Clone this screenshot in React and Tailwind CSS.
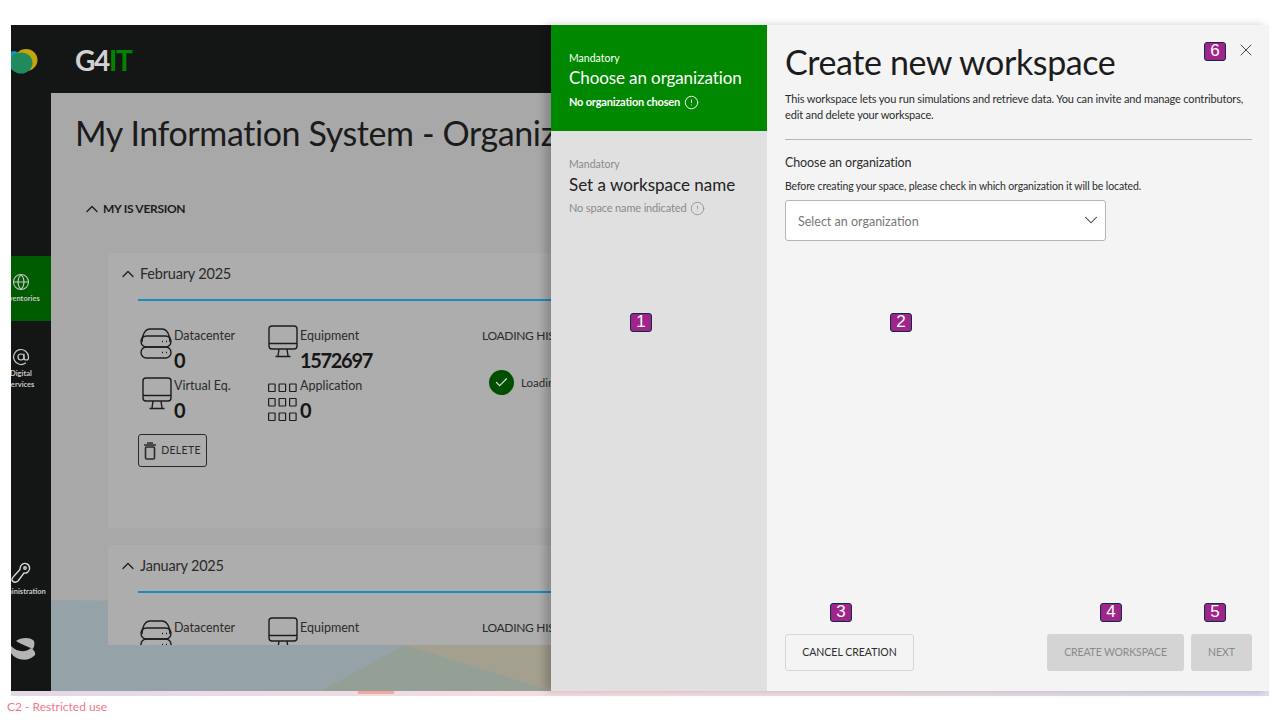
import React from "react";
import { ChevronDown, ChevronUp, CircleAlert, Check, X, Globe, AtSign } from "lucide-react";

const FONT = { fontFamily: '"Lato", "Liberation Sans", sans-serif' };

function ServerIcon() {
  return (
    <svg width="32" height="32" viewBox="0 0 32 32" fill="none" stroke="currentColor" strokeWidth="1.4">
      <path d="M2 15 C2 8 5 2 10 2 H22 C27 2 30 8 30 15" />
      <rect x="1" y="9" width="30" height="11" rx="5.5" />
      <rect x="1" y="20" width="30" height="11" rx="5.5" />
      <path d="M22 14.5h1M26 14.5h1M22 25.5h1M26 25.5h1" />
    </svg>
  );
}

function MonitorIcon() {
  return (
    <svg width="30" height="33" viewBox="0 0 30 33" fill="none" stroke="currentColor" strokeWidth="1.4">
      <rect x="1" y="1" width="28" height="23" rx="3" />
      <path d="M1 18.5h28M11 24l-1 7M19 24l1 7M7.5 31.5h15" />
    </svg>
  );
}

function GridIcon() {
  const cells = [0, 10.5, 21];
  return (
    <svg width="30" height="39" viewBox="0 0 30 39" fill="none" stroke="currentColor" strokeWidth="1.2">
      {[1, 15.5, 30].map((y) =>
        cells.map((x) => <rect key={`${x}-${y}`} x={x + 0.6} y={y} width="6.5" height="7.5" rx="0.5" />)
      )}
    </svg>
  );
}

function TrashIcon() {
  return (
    <svg width="12" height="18" viewBox="0 0 12 18" fill="none" stroke="currentColor" strokeWidth="1.6">
      <path d="M0 3h12M3 1h6" />
      <rect x="1.5" y="5" width="9" height="12" rx="1" />
    </svg>
  );
}

function KeyIcon() {
  return (
    <svg width="20" height="22" viewBox="0 0 20 22" fill="none" stroke="#d6d6d6" strokeWidth="1.4">
      <path d="M11 2.5 C14 0 19 2 18.5 7 C18 10 15.5 11.5 13 11 L7 19 C5 21 1.5 20.5 1 18 C0.5 16 2 15 3.5 13.5 L9 7.5 C8.8 5.5 9.5 3.8 11 2.5 Z" />
      <circle cx="14" cy="6" r="1.2" />
    </svg>
  );
}

function AppLogo() {
  return (
    <svg width="27" height="25" viewBox="0 0 27 25">
      <ellipse cx="3" cy="9" rx="6" ry="7" fill="#1a8fc0" />
      <ellipse cx="15" cy="11" rx="11.5" ry="11" fill="#c2a60a" />
      <ellipse cx="10" cy="14" rx="11.5" ry="10.5" fill="#1f8a5e" />
    </svg>
  );
}

function SwooshLogo() {
  return (
    <svg width="25" height="25" viewBox="0 0 25 25" fill="#b4b4b4">
      <path d="M5 4 C10 0 20 0 23 4 C24 7 23 10 22 12 C16 9 9 7 5 4 Z" />
      <path d="M0 9 C6 15 14 16 20 11 C23 13 25 16 24 18 C18 25 5 24 0 16 Z" />
    </svg>
  );
}

function NavItem({ icon, lines, active, height }) {
  return (
    <div className={`w-[60px] flex flex-col items-center justify-center text-[7.5px] leading-[11px] text-[#c8c8c8] ${height} ${active ? "bg-[#005c00]" : ""}`}>
      {icon}
      <div className="mt-[2px] text-center font-bold">
        {lines.map((l) => <div key={l}>{l}</div>)}
      </div>
    </div>
  );
}

function Stat({ icon, label, value, iconClass }) {
  return (
    <div className="flex h-[50px] items-start">
      <div className={`w-[34px] shrink-0 text-[#1c1c1c] ${iconClass}`}>{icon}</div>
      <div>
        <div className="pt-[1px] text-[12.5px] leading-[19px] text-[#2b2b2b] whitespace-nowrap">{label}</div>
        <div className="text-[20px] leading-[30px] font-bold text-[#161616] tracking-[-1.3px] whitespace-nowrap">{value}</div>
      </div>
    </div>
  );
}

function VersionCard({ title, stats, extra, height }) {
  return (
    <div className={`w-[700px] shrink-0 bg-[#adadad] rounded-[3px] pl-[10px] ${height}`}>
      <div className="flex items-center h-[41px]">
        <ChevronUp size={20} strokeWidth={1.5} className="text-[#1c1c1c]" />
        <span className="ml-[2px] text-[14.5px] tracking-[-0.2px] text-[#2a2a2a]">{title}</span>
      </div>
      <div className="ml-[20px] mt-[5px] h-[2px] bg-[#1a8cbc]" />
      <div className="ml-[22px] mt-[24px] flex">
        <div className="w-[342px] shrink-0">
          <div className="grid grid-cols-[128px_1fr]">
            {stats.map((s) => <Stat key={s.label} {...s} />)}
          </div>
          {extra}
        </div>
        <div>
          <div className="pt-[1px] text-[12px] leading-[19px] tracking-[-0.3px] text-[#2b2b2b] whitespace-nowrap">LOADING HISTORY</div>
          {title === "February 2025" && (
            <div className="mt-[25px] ml-[7px] flex items-center">
              <span className="w-[25px] h-[25px] rounded-full bg-[#004f00] flex items-center justify-center">
                <Check size={15} strokeWidth={2} className="text-[#d8d8d8]" />
              </span>
              <span className="ml-[7px] text-[11.5px] text-[#2b2b2b]">Loading</span>
            </div>
          )}
        </div>
      </div>
    </div>
  );
}

function Callout({ n, className }) {
  return (
    <span
      className={`absolute w-[22px] h-[19px] rounded-[3px] border-[1.5px] border-[#0f2a44] bg-[#a0258a] text-white text-[17px] leading-[16px] text-center ${className}`}
      style={{ fontFamily: '"Liberation Sans", sans-serif' }}
    >
      {n}
    </span>
  );
}

const FEB_STATS = [
  { icon: <ServerIcon />, label: "Datacenter", value: "0", iconClass: "pt-[2px]" },
  { icon: <MonitorIcon />, label: "Equipment", value: "1\u200A572\u200A697", iconClass: "-mr-[2px]" },
  { icon: <MonitorIcon />, label: "Virtual Eq.", value: "0", iconClass: "pt-[2px] pl-[2px]" },
  { icon: <GridIcon />, label: "Application", value: "0", iconClass: "pt-[8px] -mr-[2px]" },
];

const JAN_STATS = [
  { icon: <ServerIcon />, label: "Datacenter", value: "0", iconClass: "pt-[2px]" },
  { icon: <MonitorIcon />, label: "Equipment", value: "0", iconClass: "-mr-[2px]" },
];

export default function App() {
  return (
    <div className="relative w-[1280px] h-[720px] overflow-hidden bg-white" style={FONT}>
      <div className="h-[25px]" />

      <div className="ml-[11px] w-[1258px] h-[666px] flex relative">
        {/* dimmed page behind the drawer */}
        <div className="w-[540px] shrink-0 flex overflow-hidden">
          <aside className="w-[40px] shrink-0 bg-[#141615] overflow-hidden">
            <div className="-ml-[20px] w-[60px] h-full flex flex-col">
              <div className="pl-[20px] pt-[24px] h-[231px]"><AppLogo /></div>
              <NavItem active height="h-[65px]" icon={<Globe size={18} strokeWidth={1.4} />} lines={["Inventories"]} />
              <div className="h-[23px]" />
              <NavItem height="h-[50px]" icon={<AtSign size={18} strokeWidth={1.6} />} lines={["Digital", "services"]} />
              <div className="h-[165px]" />
              <NavItem height="h-[40px]" icon={<KeyIcon />} lines={["Administration"]} />
              <div className="pl-[20px] pt-[38px]"><SwooshLogo /></div>
            </div>
          </aside>

          <div className="w-[500px] shrink-0 flex flex-col">
            <header className="h-[68px] shrink-0 bg-[#141615] pl-[24px] pt-[17px] text-[28px] leading-[36px] font-bold tracking-[-1.3px]">
              <span className="text-[#d2d2d2]">G4</span>
              <span className="text-[#008400]">IT</span>
            </header>

            <main className="relative flex-1 overflow-hidden">
              <svg className="absolute inset-0" width="500" height="598" viewBox="0 0 500 598">
                <rect width="500" height="598" fill="#a8a8a8" />
                <polygon points="0,507 500,512 500,598 0,598" fill="#95a2a7" />
                <polygon points="270,598 354,552 500,598" fill="#949f96" />
                <polygon points="354,552 500,552 500,598" fill="#a3a08f" />
              </svg>
              <div className="relative h-[552px] overflow-hidden">
                <h1 className="pl-[24px] pt-[15px] text-[34px] leading-[50px] tracking-[-0.4px] text-[#1b1b1b] whitespace-nowrap">
                  My Information System - Organization
                </h1>
                <div className="ml-[31px] mt-[36px] flex items-center h-[30px]">
                  <ChevronUp size={20} strokeWidth={1.6} className="text-[#1c1c1c]" />
                  <span className="ml-[1px] text-[12px] font-bold tracking-[-0.3px] text-[#1c1c1c]">MY IS VERSION</span>
                </div>
                <div className="ml-[57px] mt-[29px] flex flex-col gap-[17px]">
                  <VersionCard
                    title="February 2025"
                    stats={FEB_STATS}
                    height="h-[275px]"
                    extra={
                      <button className="-ml-[2px] mt-[9px] w-[69px] h-[33px] flex items-center justify-center gap-[5px] border border-[#2a2a2a] rounded-[3px] text-[10.5px] tracking-[0.3px] text-[#2a2a2a]">
                        <TrashIcon /> DELETE
                      </button>
                    }
                  />
                  <VersionCard title="January 2025" stats={JAN_STATS} height="h-[275px]" />
                </div>
              </div>
            </main>
          </div>
        </div>

        {/* drawer */}
        <div className="relative flex-1 flex shadow-[-6px_0_8px_rgba(0,0,0,0.2)]">
          <nav className="w-[216px] shrink-0 bg-[#e0e0e0]">
            <div className="h-[106px] bg-[#008800] text-white pl-[18px] pt-[26px]">
              <div className="text-[10.5px] leading-[14px]">Mandatory</div>
              <div className="text-[17px] leading-[26px] tracking-[-0.1px] whitespace-nowrap">Choose an organization</div>
              <div className="mt-[3px] flex items-center gap-[4px] text-[11px] leading-[16px] font-bold tracking-[-0.2px] whitespace-nowrap">
                No organization chosen <CircleAlert size={15} strokeWidth={1.5} />
              </div>
            </div>
            <div className="mt-[2px] pl-[18px] pt-[24px]">
              <div className="text-[10.5px] leading-[14px] text-[#8a8a8a]">Mandatory</div>
              <div className="text-[17px] leading-[26px] mt-[1px] text-[#222] whitespace-nowrap">Set a workspace name</div>
              <div className="mt-[2px] flex items-center gap-[4px] text-[11px] leading-[16px] tracking-[-0.15px] text-[#8a8a8a] whitespace-nowrap">
                No space name indicated <CircleAlert size={15} strokeWidth={1.3} />
              </div>
            </div>
          </nav>

          <section className="relative flex-1 bg-[#f4f4f4] pl-[18px] pr-[17px] flex flex-col">
            <div className="flex justify-between items-start">
              <h2 className="pt-[15px] text-[34px] leading-[44px] tracking-[-0.4px] text-[#1c1c1c] whitespace-nowrap">Create new workspace</h2>
              <X size={20} strokeWidth={1.2} className="mt-[15px] -mr-[4px] text-[#444]" />
            </div>
            <p className="mt-[7px] text-[11px] leading-[16px] tracking-[-0.15px] text-[#2c2c2c]">
              This workspace lets you run simulations and retrieve data. You can invite and manage contributors, edit and delete your workspace.
            </p>
            <hr className="mt-[16px] border-[#b4b4b4]" />
            <div className="mt-[14px] text-[12.5px] leading-[18px] tracking-[-0.1px] text-[#2c2c2c]">Choose an organization</div>
            <div className="mt-[6px] text-[10.5px] leading-[16px] tracking-[-0.13px] text-[#2c2c2c] whitespace-nowrap">
              Before creating your space, please check in which organization it will be located.
            </div>
            <div className="mt-[6px] w-[321px] h-[41px] bg-white border border-[#b4b4b4] rounded-[3px] pl-[12px] pr-[3px] flex items-center justify-between text-[12.5px] text-[#777]">
              <span className="mt-[3px]">Select an organization</span>
              <ChevronDown size={22} strokeWidth={1.1} className="-mt-[2px] text-[#333]" />
            </div>

            <div className="mt-auto mb-[20px] flex items-center">
              <button className="w-[129px] h-[37px] border border-[#d6d6d6] rounded-[3px] text-[10.5px] text-[#2c2c2c]">CANCEL CREATION</button>
              <button className="ml-auto w-[137px] h-[37px] bg-[#d4d4d4] rounded-[3px] text-[10.5px] tracking-[-0.15px] text-[#8a8a8a]">CREATE WORKSPACE</button>
              <button className="ml-[7px] w-[61px] h-[37px] bg-[#d4d4d4] rounded-[3px] text-[10.5px] text-[#8a8a8a]">NEXT</button>
            </div>
          </section>

          <Callout n="1" className="left-[79px] top-[288px]" />
          <Callout n="2" className="left-[339px] top-[288px]" />
          <Callout n="3" className="left-[279px] top-[578px]" />
          <Callout n="4" className="left-[549px] top-[578px]" />
          <Callout n="5" className="left-[653px] top-[578px]" />
          <Callout n="6" className="left-[653px] top-[17px]" />
        </div>
      </div>

      <div className="ml-[11px] w-[1258px] h-[5px] bg-gradient-to-r from-[#e3d8e8] via-[#f6dfe2] to-[#dcdcea] flex">
        <div className="ml-[347px] w-[36px] h-[3px] bg-[#f0a8a0]" />
      </div>
      <div className="pl-[7px] pt-[2px] text-[12px] leading-[18px] text-[#f0788c]">C2 - Restricted use</div>
    </div>
  );
}
